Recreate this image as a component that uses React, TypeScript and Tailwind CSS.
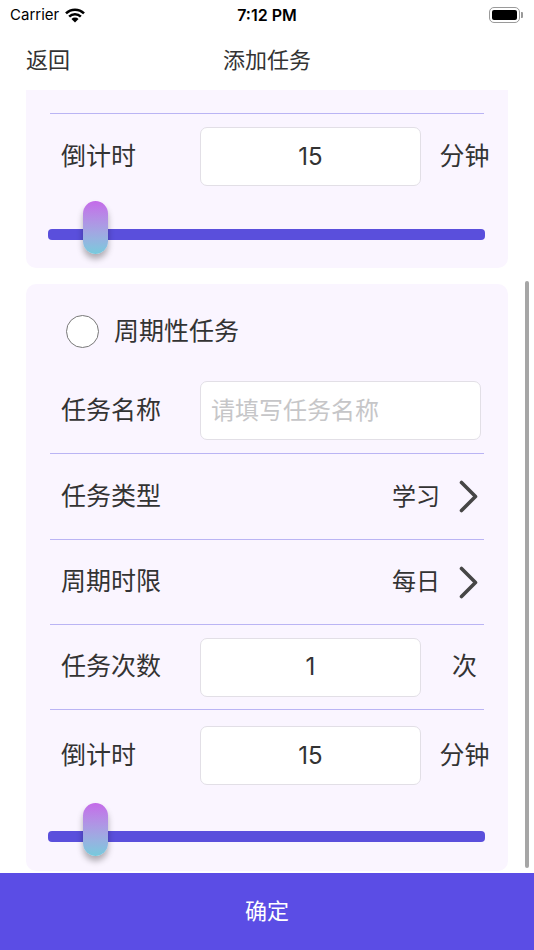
import React from "react";

// 分隔线
function Divider() {
  return <div className="mx-[24px] h-px bg-[#bab4f4]" />;
}

interface InputRowProps {
  label: string;
  value: string;
  unit: string;
  height?: string;
}

// 标签 + 输入框 + 单位
function InputRow({ label, value, unit, height = "h-[85px]" }: InputRowProps) {
  return (
    <div className={`flex items-center pl-[35px] ${height}`}>
      <span className="w-[139px] text-[25px] text-[#333]">{label}</span>
      <div className="flex h-[59px] w-[221px] items-center justify-center rounded-[7px] border border-[#e2dfe6] bg-white text-[24px] text-[#333]">
        {value}
      </div>
      <span className="flex-1 text-center text-[25px] text-[#333]">{unit}</span>
    </div>
  );
}

interface SelectRowProps {
  label: string;
  value: string;
  height?: string;
}

function SelectRow({ label, value, height = "h-[85px]" }: SelectRowProps) {
  return (
    <div className={`flex items-center pl-[35px] pr-[30px] ${height}`}>
      <span className="flex-1 text-[25px] text-[#333]">{label}</span>
      <span className="text-[24px] text-[#333]">{value}</span>
      <svg className="ml-[19px]" width="19" height="33" viewBox="0 0 19 33">
        <path
          d="M2.5 2.5 L16.5 16.5 L2.5 30.5"
          stroke="#464646"
          strokeWidth="3.6"
          fill="none"
          strokeLinecap="round"
          strokeLinejoin="round"
        />
      </svg>
    </div>
  );
}

// 滑块
function Slider() {
  return (
    <div className="relative mx-[22px] mt-[2px] h-[53px]">
      <div className="absolute left-0 right-px top-[28px] h-[11px] rounded-[4px] bg-[#5a4fdc]" />
      <div className="absolute left-[35px] top-0 h-[53px] w-[25px] rounded-full bg-linear-to-b from-[#c46ae9] to-[#76cadc] shadow-[0_5px_6px_rgba(0,0,0,0.3)]" />
    </div>
  );
}

function StatusBar() {
  return (
    <div className="grid h-[30px] grid-cols-3 items-center px-[10px] text-[15px] text-black">
      <div className="flex items-center gap-[6px]">
        <span>Carrier</span>
        <svg width="20" height="15" viewBox="0 0 20 15" fill="#000">
          <path d="M10 14.5 L6.46 10.96 A5 5 0 0 1 13.54 10.96 Z" />
          <path d="M3.28 7.78 A9.5 9.5 0 0 1 16.72 7.78 L14.95 9.55 A7 7 0 0 0 5.05 9.55 Z" />
          <path d="M0.1 4.6 A14 14 0 0 1 19.9 4.6 L18.13 6.37 A11.5 11.5 0 0 0 1.87 6.37 Z" />
        </svg>
      </div>
      <div className="text-center text-[16px] font-semibold">7:12 PM</div>
      <div className="flex items-center justify-end gap-[1px] pr-[1px]">
        <div className="h-[16px] w-[31px] rounded-[5px] border border-[#9a9a9a] p-[2px]">
          <div className="h-full w-full rounded-[2px] bg-black" />
        </div>
        <div className="h-[6px] w-[2px] rounded-r-[1px] bg-[#9a9a9a]" />
      </div>
    </div>
  );
}

export default function App() {
  return (
    <div className="flex h-[950px] w-[534px] flex-col overflow-hidden bg-white font-['Inter','Noto_Sans_CJK_SC',sans-serif]">
      <StatusBar />

      {/* 导航栏 */}
      <div className="relative flex h-[60px] items-center justify-center">
        <span className="absolute left-[26px] text-[22px] text-[#333]">返回</span>
        <span className="text-[22px] text-[#333]">添加任务</span>
      </div>

      {/* 内容 */}
      <div className="relative min-h-0 flex-1 overflow-hidden">
        <div className="mx-[26px] rounded-b-[10px] bg-[#faf5ff] pb-[14px] pt-[23px]">
          <Divider />
          <InputRow label="倒计时" value="15" unit="分钟" />
          <Slider />
        </div>

        <div className="mx-[26px] mt-[16px] rounded-[10px] bg-[#faf5ff] pb-[15px] pt-[31px]">
          <div className="mb-[20px] flex h-[33px] items-center pl-[40px]">
            <div className="h-[33px] w-[33px] rounded-full border-[1.5px] border-[#787878] bg-white" />
            <span className="ml-[15px] text-[25px] text-[#333]">周期性任务</span>
          </div>

          <div className="flex h-[85px] items-center pl-[35px] pr-[26px]">
            <span className="w-[139px] text-[25px] text-[#333]">任务名称</span>
            <input
              readOnly
              placeholder="请填写任务名称"
              className="h-[59px] w-[281px] rounded-[7px] border border-[#e2dfe6] bg-white px-[10px] text-[24px] text-[#333] outline-none placeholder:text-[#c6c6c8]"
            />
          </div>
          <Divider />
          <SelectRow label="任务类型" value="学习" />
          <Divider />
          <SelectRow label="周期时限" value="每日" height="h-[84px]" />
          <Divider />
          <InputRow label="任务次数" value="1" unit="次" height="h-[84px]" />
          <Divider />
          <InputRow label="倒计时" value="15" unit="分钟" height="h-[91px]" />
          <Slider />
        </div>

        {/* 滚动条 */}
        <div className="absolute right-[5px] top-[191px] h-[587px] w-[4px] rounded-full bg-[#a6a6a6]" />
      </div>

      <button className="flex h-[77px] shrink-0 items-center justify-center bg-[#5b4de5] text-[22px] text-white">
        确定
      </button>
    </div>
  );
}
